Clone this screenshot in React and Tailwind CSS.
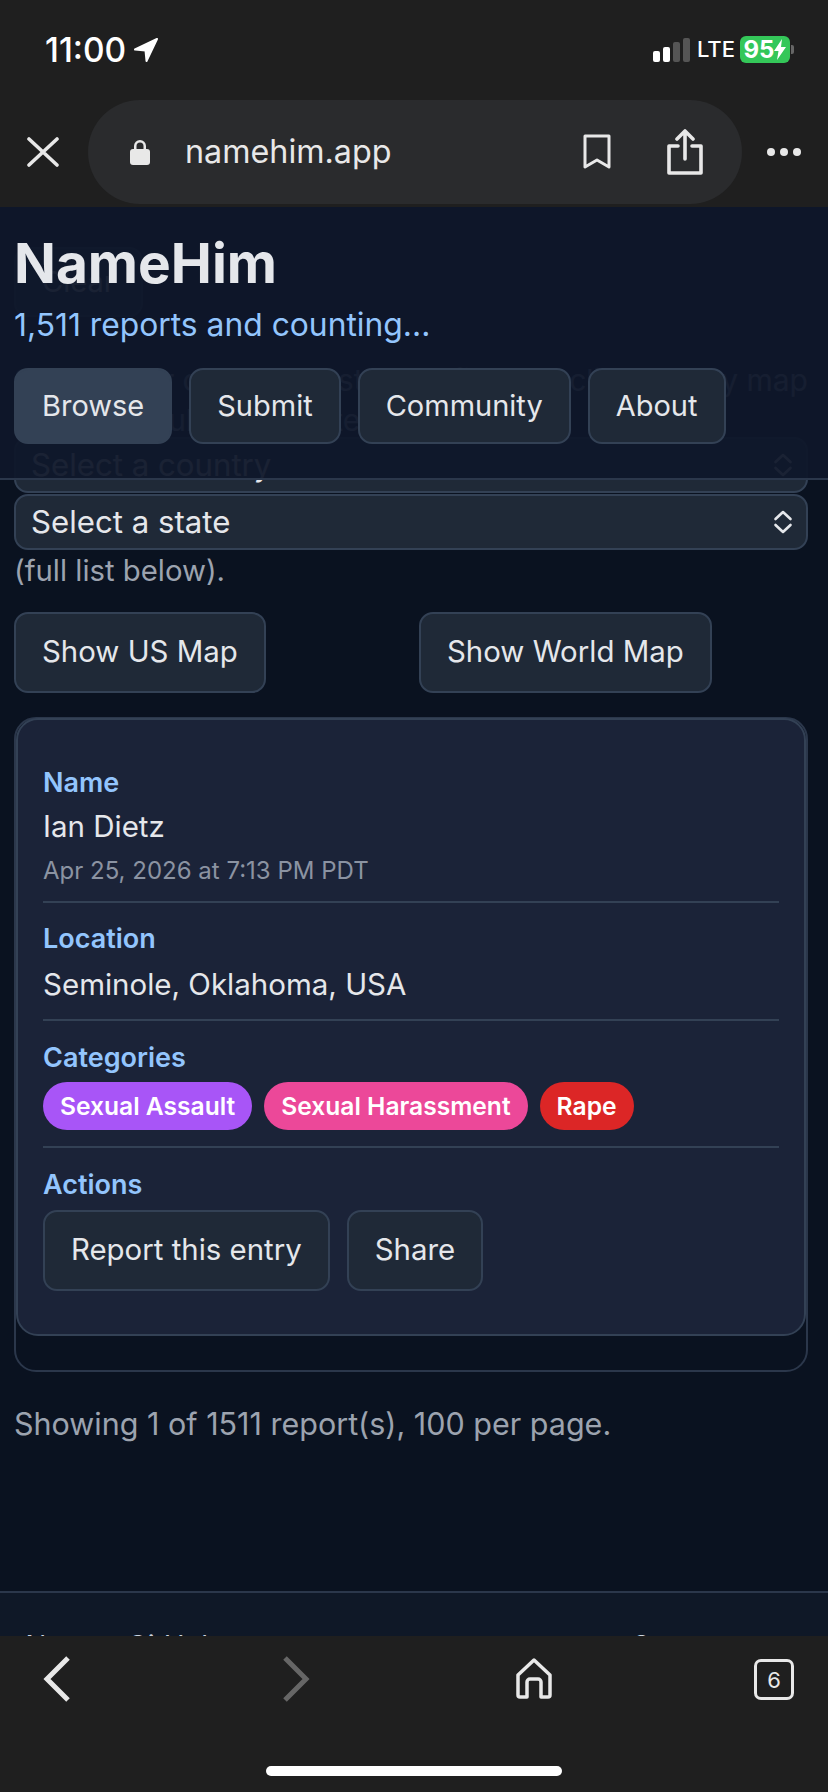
import React from 'react';

const navItems = ['Browse', 'Submit', 'Community', 'About'];

const categories = [
  { label: 'Sexual Assault', color: 'bg-[#a855f7]' },
  { label: 'Sexual Harassment', color: 'bg-[#ec4899]' },
  { label: 'Rape', color: 'bg-[#dc2626]' },
];

const Chevrons = () => (
  <svg width="22" height="26" viewBox="0 0 22 26" fill="none" stroke="currentColor" strokeWidth="2.6" strokeLinecap="round" strokeLinejoin="round">
    <path d="M3.5 10 11 3l7.500 7" />
    <path d="M3.500 16 11 23l7.500-7" />
  </svg>
);

const SelectBox = ({ label }) => (
  <div className="flex h-[56px] shrink-0 items-center justify-between rounded-[14px] border-2 border-[#334155] bg-[#1f2937] pl-[15px] pr-[12px] text-[31.200px] text-[#e5e7eb]">
    <span>{label}</span>
    <Chevrons />
  </div>
);

const Button = ({ children, active, tall }) => (
  <button className={`rounded-[14px] border-2 border-[#334155] px-[26px] text-[#e5e7eb] ${tall ? 'h-[81px] text-[29.400px]' : 'h-[76px] text-[29px]'} ${active ? 'bg-[#334155]' : 'bg-[#1f2937]'}`}>
    {children}
  </button>
);

const Field = ({ label, children }) => (
  <div>
    <div className="text-[27px] font-semibold leading-[36px] text-[#93c5fd]">{label}</div>
    {children}
  </div>
);

const TopChrome = () => (
  <div className="h-[207px] shrink-0 bg-[#1f1f1f] text-white">
    <div className="flex h-[100px] items-start justify-between pl-[45px] pr-[34px]">
      <div className="mt-[29px] flex items-center gap-[7px]">
        <span className="text-[33.500px] font-medium leading-[42px]">11:00</span>
        <svg width="26" height="26" viewBox="0 0 26 26" fill="white" stroke="white" strokeWidth="2" strokeLinejoin="round">
          <path d="M24 2 2 12.500l10.500 1 1 10.500z" />
        </svg>
      </div>
      <div className="mt-[36px] flex items-center">
        <div className="flex items-end gap-[3px]">
          <span className="h-[11px] w-[7px] rounded-[2px] bg-white" />
          <span className="h-[15px] w-[7px] rounded-[2px] bg-white" />
          <span className="h-[20px] w-[7px] rounded-[2px] bg-[#555]" />
          <span className="h-[24px] w-[7px] rounded-[2px] bg-[#555]" />
        </div>
        <span className="ml-[7px] text-[22px] font-medium leading-[27px]">LTE</span>
        <div className="ml-[5px] flex h-[27px] w-[50px] items-center justify-center rounded-[6px] bg-[#34c759] text-[24px] font-bold leading-none">
          95
          <svg width="12" height="21" viewBox="0 0 12 21" fill="white">
            <path d="M8 0 0 12h4.500L3 21l9-13H7z" />
          </svg>
        </div>
        <span className="ml-[1px] h-[9px] w-[3px] rounded-r-[2px] bg-[#666]" />
      </div>
    </div>
    <div className="flex items-center">
      <svg className="ml-[27px] shrink-0" width="32" height="30" viewBox="0 0 32 30" fill="none" stroke="#e8e8e8" strokeWidth="3.600" strokeLinecap="round">
        <path d="M2 2l28 26M30 2 2 28" />
      </svg>
      <div className="ml-[29px] flex h-[104px] w-[654px] shrink-0 items-center rounded-full bg-[#2a2b2d] text-[#e8e8e8]">
        <svg className="ml-[42px]" width="20" height="26" viewBox="0 0 20 26" fill="#e8e8e8">
          <path d="M4 11V7a6 6 0 0 1 12 0v4h-2.500V7a3.500 3.500 0 0 0-7 0v4z" />
          <rect x="0" y="10" width="20" height="16" rx="3" />
        </svg>
        <span className="ml-[35px] text-[32.300px] leading-none">namehim.app</span>
        <svg className="ml-[191px]" width="28" height="36" viewBox="0 0 28 36" fill="none" stroke="#e8e8e8" strokeWidth="3">
          <path d="M2 2h24v31L14 26 2 33z" strokeLinejoin="round" />
        </svg>
        <svg className="ml-[55px]" width="38" height="46" viewBox="0 0 38 46" fill="none" stroke="#e8e8e8" strokeWidth="3.600" strokeLinecap="round" strokeLinejoin="round">
          <path d="M12 17H3v27h32V17h-9" />
          <path d="M19 30V3M11 10l8-8 8 8" />
        </svg>
      </div>
      <div className="ml-[25px] flex gap-[5px]">
        <span className="h-[8px] w-[8px] rounded-full bg-[#e8e8e8]" />
        <span className="h-[8px] w-[8px] rounded-full bg-[#e8e8e8]" />
        <span className="h-[8px] w-[8px] rounded-full bg-[#e8e8e8]" />
      </div>
    </div>
  </div>
);

const BottomChrome = () => (
  <div className="relative h-[156px] shrink-0 bg-[#1f1f1f]">
    <div className="flex h-[66px] items-end pl-[43px]">
      <svg width="28" height="46" viewBox="0 0 28 46" fill="none" stroke="#e8e8e8" strokeWidth="5">
        <path d="M25 2 4 23l21 21" />
      </svg>
      <svg className="ml-[211px]" width="28" height="46" viewBox="0 0 28 46" fill="none" stroke="#666" strokeWidth="5">
        <path d="M3 2l21 21L3 44" />
      </svg>
      <svg className="mb-[3px] ml-[205px]" width="38" height="41" viewBox="0 0 38 41" fill="none" stroke="#e8e8e8" strokeWidth="3.500" strokeLinejoin="round">
        <path d="M19 2 3 17v20a2 2 0 0 0 2 2h7V24a3 3 0 0 1 3-3h8a3 3 0 0 1 3 3v15h7a2 2 0 0 0 2-2V17z" />
      </svg>
      <div className="mb-[2px] ml-[201px] flex h-[41px] w-[40px] items-center justify-center rounded-[7px] border-[3.5px] border-[#e8e8e8] text-[22px] leading-none text-[#e8e8e8]">
        6
      </div>
    </div>
    <div className="mx-auto mt-[64px] h-[10px] w-[296px] rounded-full bg-white" />
  </div>
);

export default function App() {
  return (
    <div className="flex h-[1792px] w-[828px] flex-col overflow-hidden bg-[#0a1220] font-[Inter,sans-serif]">
      <TopChrome />

      <div className="relative min-h-0 flex-1 overflow-hidden">
        {/* page scrolled under the sticky header */}
        <div className="pl-[14px] pr-[20px] pt-[40px]">
          <button className="h-[70px] rounded-[14px] border-2 border-[#334155] bg-[#1f2937] px-[26px] text-[29px] text-[#e5e7eb]">
            Clear
          </button>
          <p className="mt-[43px] text-[30px] leading-[40px] text-[#9ca3af]">
            Select your country or state to filter, or click on any map to view results, then filter.
          </p>
          <div className="mt-[-3px] flex flex-col gap-[1px]">
            <SelectBox label="Select a country" />
            <SelectBox label="Select a state" />
          </div>
          <p className="text-[29.300px] leading-[42px] text-[#9ca3af]">(full list below).</p>

          <div className="mt-[20px] grid grid-cols-2 gap-[16px] justify-items-start">
            <Button tall>Show US Map</Button>
            <Button tall>Show World Map</Button>
          </div>

          <div className="mt-[24px] rounded-[22px] border-2 border-[#2b374b] pb-[34px]">
            <div className="-mt-[1px] rounded-[22px] border-2 border-[#334155] bg-[#1b2338] px-[25px] pb-[43px] pt-[45px]">
              <Field label="Name">
                <div className="mt-[7px] text-[29.500px] leading-[36px] text-[#e5e7eb]">Ian Dietz</div>
                <div className="mt-[10px] text-[24px] leading-[34px] text-[#8b93a2]">Apr 25, 2026 at 7:13 PM PDT</div>
              </Field>
              <div className="mb-[18px] mt-[13px] h-[2px] bg-[#334155]" />
              <Field label="Location">
                <div className="mt-[9px] text-[29.500px] leading-[36px] text-[#e5e7eb]">Seminole, Oklahoma, USA</div>
              </Field>
              <div className="mb-[19px] mt-[17px] h-[2px] bg-[#334155]" />
              <Field label="Categories">
                <div className="mt-[6px] flex gap-[12px]">
                  {categories.map(cat => (
                    <span key={cat.label} className={`flex h-[48px] items-center rounded-full px-[17px] text-[24.600px] font-semibold text-white ${cat.color}`}>
                      {cat.label}
                    </span>
                  ))}
                </div>
              </Field>
              <div className="mb-[19px] mt-[16px] h-[2px] bg-[#334155]" />
              <Field label="Actions">
                <div className="mt-[7px] flex gap-[17px]">
                  <Button tall>Report this entry</Button>
                  <Button tall>Share</Button>
                </div>
              </Field>
            </div>
          </div>

          <p className="mt-[29px] text-[30.500px] leading-[46px] text-[#9ca3af]">Showing 1 of 1511 report(s), 100 per page.</p>
        </div>

        {/* footer */}
        <div className="absolute inset-x-0 top-[1384px] h-[100px] border-t-2 border-[#2b374b] bg-[#0f1827]">
          <div className="flex pl-[20px] pt-[32px] text-[28px] text-[#cbd5e1]">
            <span>About</span>
            <span className="ml-[28px]">GitHub</span>
            <span className="ml-[414px]">Source</span>
          </div>
        </div>

        {/* sticky header */}
        <div className="absolute inset-x-0 top-0 h-[273px] border-b-2 border-[#2b374b] bg-[#0f172a]/95 px-[14px] pt-[24px]">
          <h1 className="text-[55px] font-bold leading-[64px] text-[#e5e7eb]">NameHim</h1>
          <p className="mt-[10px] text-[31.800px] leading-[40px] text-[#93c5fd]">1,511 reports and counting...</p>
          <div className="mt-[23px] flex gap-[17px]">
            {navItems.map(item => (
              <Button key={item} active={item === 'Browse'}>{item}</Button>
            ))}
          </div>
        </div>
      </div>

      <BottomChrome />
    </div>
  );
}
